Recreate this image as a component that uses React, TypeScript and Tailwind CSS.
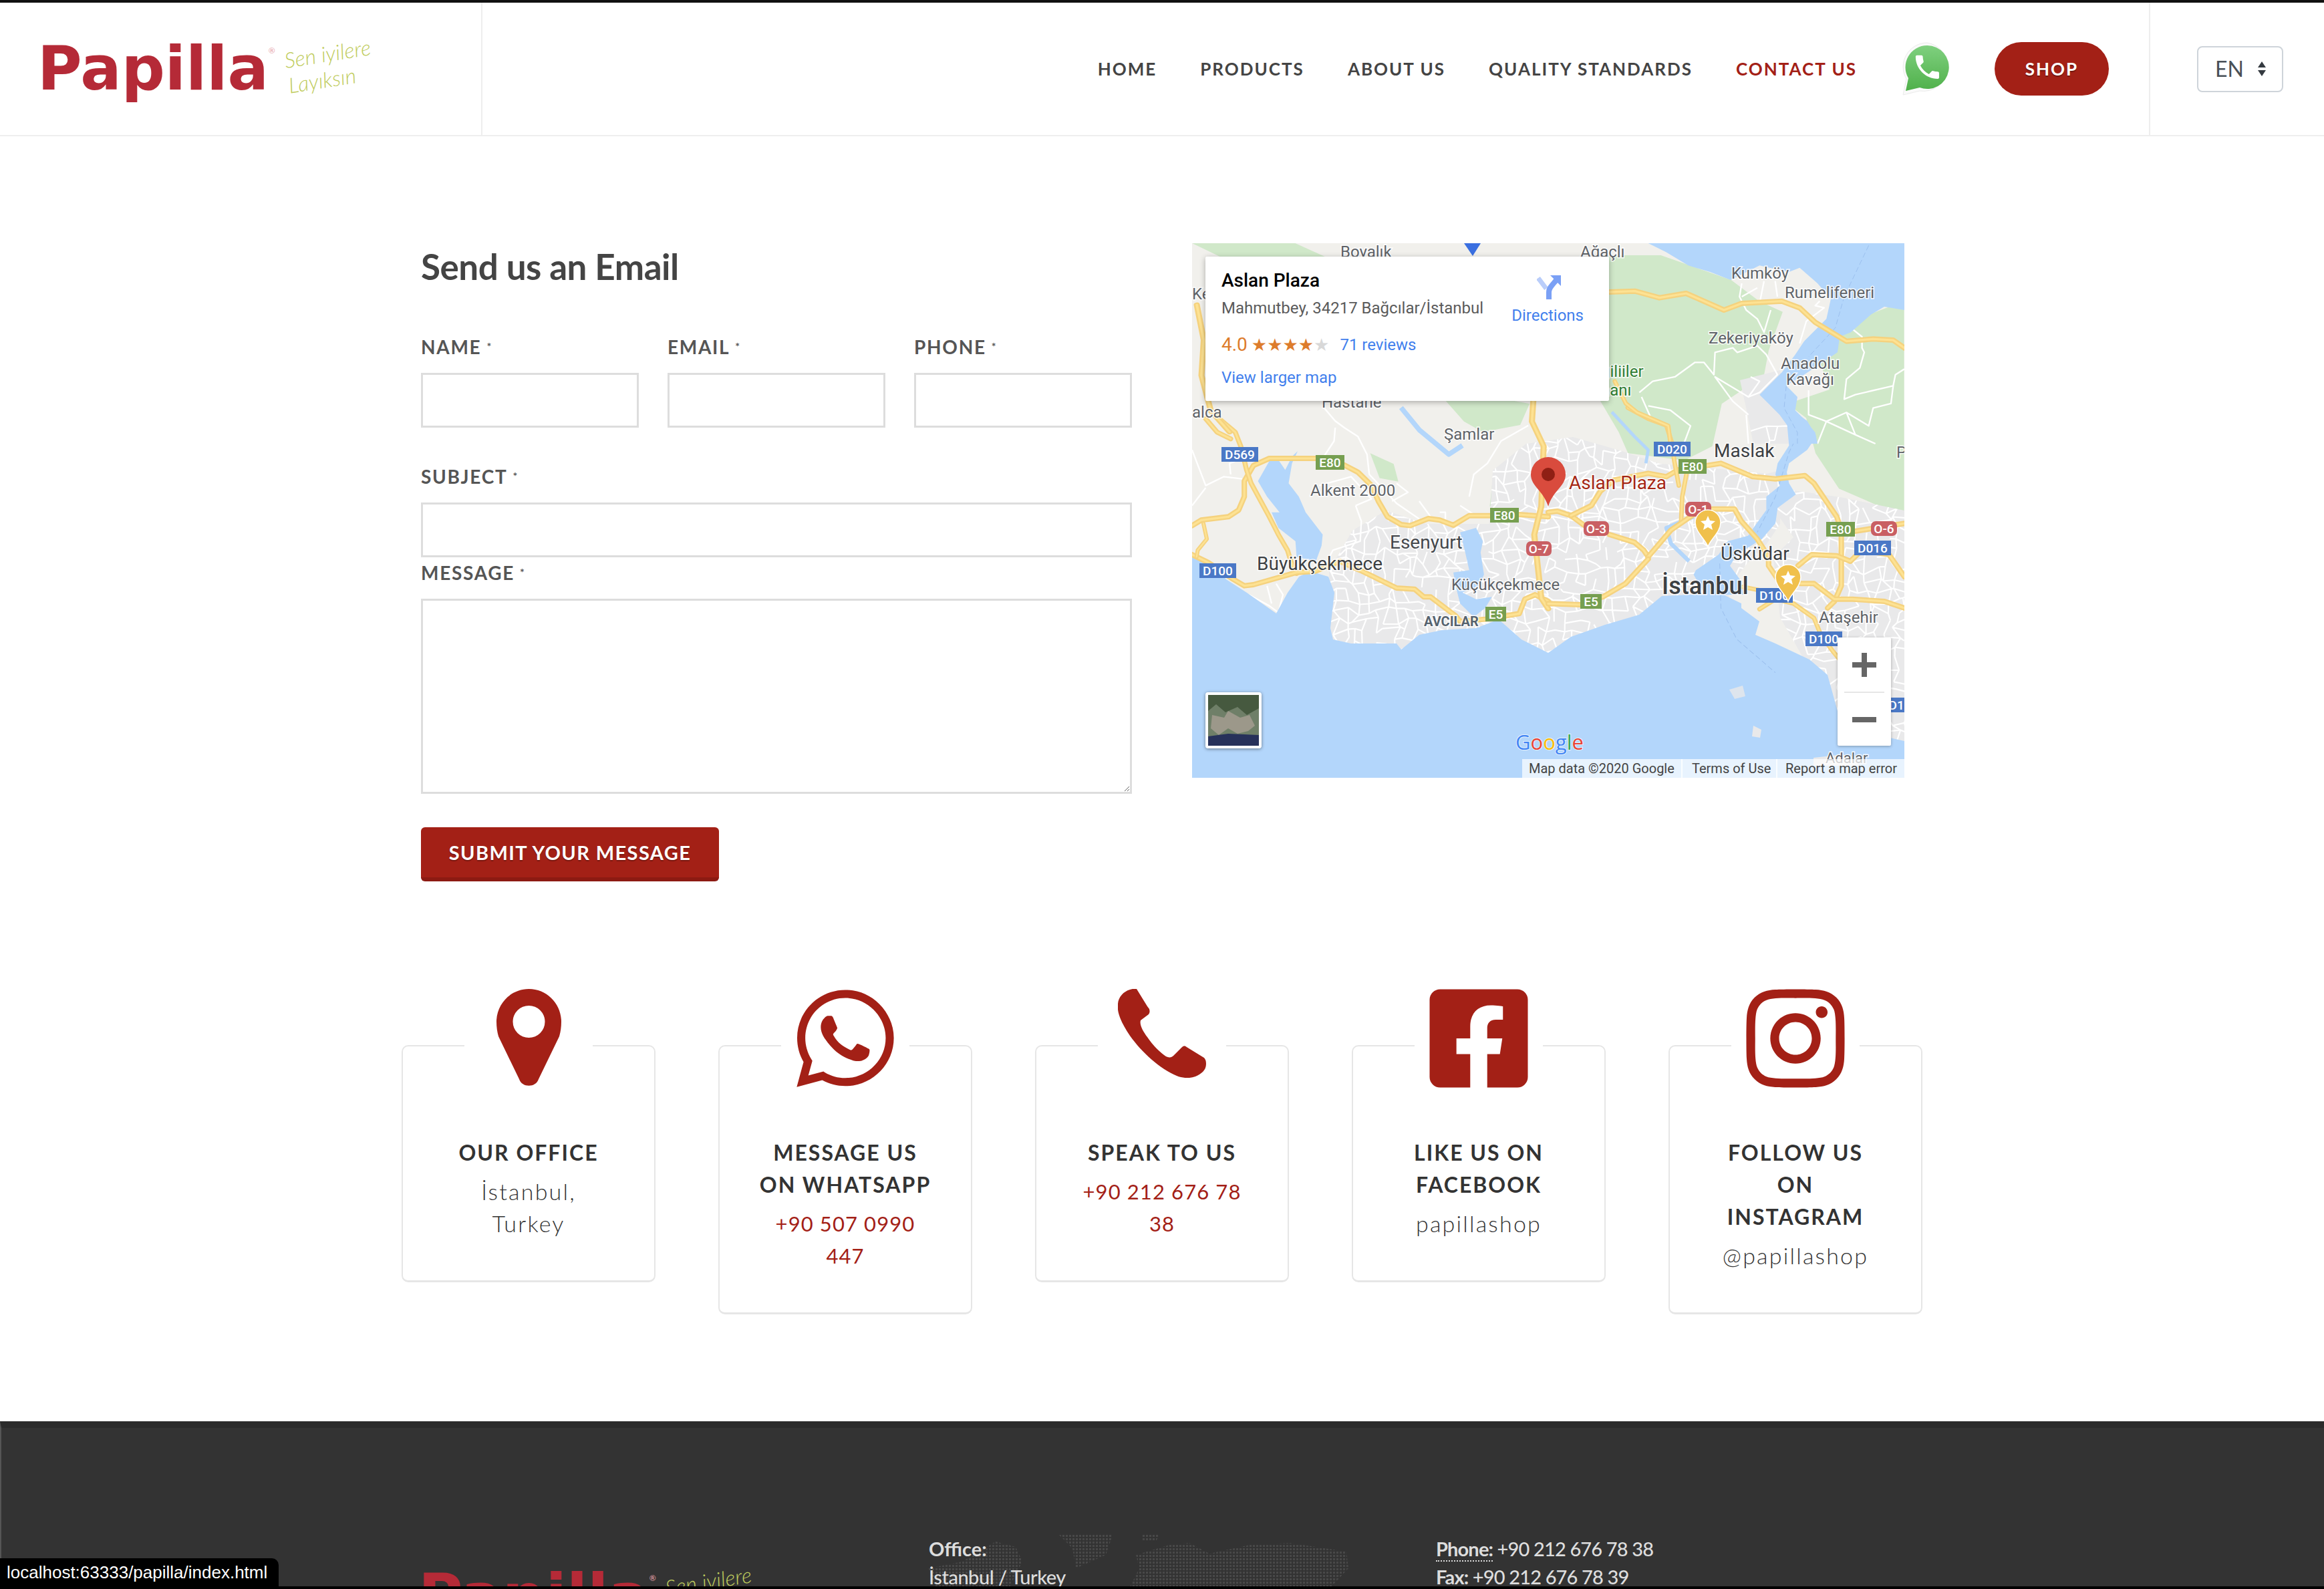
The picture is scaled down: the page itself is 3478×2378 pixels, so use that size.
import React from "react";
import { FaWhatsapp, FaFacebookSquare, FaInstagram } from "react-icons/fa";

const RED = "text-[#a32016]";

// street mesh for the map, a jittered grid so it does not look like graph paper
const makeMesh = (x0: number, y0: number, x1: number, y1: number, step: number, seed: number, keep: number) => {
  let s = seed;
  const rnd = () => {
    s = (s * 16807) % 2147483647;
    return s / 2147483647;
  };
  const cols = Math.ceil((x1 - x0) / step);
  const rows = Math.ceil((y1 - y0) / step);
  const pts: number[][][] = [];
  for (let r = 0; r <= rows; r++) {
    pts[r] = [];
    for (let c = 0; c <= cols; c++) {
      pts[r][c] = [x0 + c * step + (rnd() - 0.5) * step * 0.95, y0 + r * step + (rnd() - 0.5) * step * 0.95];
    }
  }
  let d = "";
  for (let r = 0; r <= rows; r++) {
    for (let c = 0; c <= cols; c++) {
      const p = pts[r][c];
      if (c < cols && rnd() < keep) d += `M${p[0].toFixed(1)} ${p[1].toFixed(1)}L${pts[r][c + 1][0].toFixed(1)} ${pts[r][c + 1][1].toFixed(1)}`;
      if (r < rows && rnd() < keep) d += `M${p[0].toFixed(1)} ${p[1].toFixed(1)}L${pts[r + 1][c][0].toFixed(1)} ${pts[r + 1][c][1].toFixed(1)}`;
    }
  }
  return d;
};

const denseMesh = makeMesh(200, 280, 1066, 780, 15, 4711, 0.76);

const Shield = ({ x, y, w, label, kind }: { x: number; y: number; w: number; label: string; kind: "g" | "b" | "r" }) => (
  <g>
    <rect x={x} y={y} width={w} height={22} rx={kind === "r" ? 7 : 0} fill={kind === "g" ? "#769f50" : kind === "b" ? "#4a78c6" : "#c95f63"} />
    <text x={x + w / 2} y={y + 18} textAnchor="middle" fontFamily="Roboto" fontWeight={500} fontSize={19} fill="#fff">
      {label}
    </text>
  </g>
);

const Label = ({ x, y, size = 24, fill = "#5f6368", weight = 400, children }: { x: number; y: number; size?: number; fill?: string; weight?: number; children: React.ReactNode }) => (
  <text x={x} y={y} fontFamily="Roboto" fontSize={size} fontWeight={weight} fill={fill} stroke="#ffffff" strokeOpacity={0.85} strokeWidth={3} paintOrder="stroke">
    {children}
  </text>
);

const Road = ({ d, w = 9 }: { d: string; w?: number }) => (
  <g fill="none" strokeLinejoin="round" strokeLinecap="round">
    <path d={d} stroke="#f5d27e" strokeWidth={w} />
    <path d={d} stroke="#fde293" strokeWidth={w * 0.4} />
  </g>
);

const YellowPin = ({ x, y }: { x: number; y: number }) => (
  <g transform={`translate(${x} ${y})`}>
    <path d="M19 55C15 44 0 33 0 19a19 19 0 0 1 38 0C38 33 23 44 19 55z" fill="#f0c04c" stroke="#fff" strokeWidth={1.5} />
    <polygon points="19,9 22,16 30,17 24,22 26,30 19,26 12,30 14,22 8,17 16,16" fill="#fff" />
  </g>
);

const MapArt = () => (
  <svg width={1066} height={800} viewBox="0 0 1066 800" className="absolute left-0 top-0">
    <defs>
      <clipPath id="urban">
        <polygon points="205,600 205,490 240,430 290,400 350,420 445,420 450,340 500,300 570,290 640,310 700,330 760,335 860,345 880,340 880,420 860,450 830,480 800,520 830,600 400,640" />
        <polygon points="830,340 900,370 970,380 1066,400 1066,780 960,700 880,560 870,470 900,440" />
        <polygon points="820,205 880,190 890,250 900,300 840,300 830,250" />
      </clipPath>
    </defs>
    <rect width={1066} height={800} fill="#f1f0ec" />

    {/* green, traced in the squashed zoom coordinates */}
    <g transform="translate(-14 -13.8) scale(.7015 .5293)" fill="#d0e8c9">
      <polygon points="909,60 1020,60 1170,130 1230,190 1280,220 1250,330 1240,400 1150,480 1130,600 1070,640 950,620 930,560 890,470 909,400" />
      <polygon points="1340,290 1539,190 1539,800 1400,720 1350,620 1330,520 1290,480 1380,440" />
      <polygon points="560,470 700,470 740,480 720,540 640,560 600,530" />
      <polygon points="20,26 240,26 330,80 200,130 120,90" />
      <polygon points="400,620 450,650 460,700 420,690" />
      <polygon points="660,710 680,710 680,770 655,770" />
    </g>

    <polygon points="205,600 205,490 240,430 290,400 350,420 445,420 450,340 500,300 570,290 640,310 700,330 760,335 860,345 880,340 880,420 860,450 830,480 800,520 830,600 400,640" fill="#e9e9ea" />
    <polygon points="830,340 900,370 970,380 1066,400 1066,780 960,700 880,560 870,470 900,440" fill="#e9e9ea" />
    <polygon points="820,205 880,190 890,250 900,300 840,300 830,250" fill="#e9e9ea" />
    <path d={denseMesh} clipPath="url(#urban)" stroke="#fff" strokeWidth={2.2} fill="none" />

    {/* sparse roads, west side */}
    <g transform="translate(0 246) scale(.34 .3333)" fill="none" stroke="#fff" strokeWidth={7} strokeLinejoin="round">
      <path d="M0 190L60 350L140 310L220 320M0 440L60 360M170 300L165 250L240 220" />
      <path d="M580 0L630 60L670 90L730 130L770 210L780 300L900 430L1000 500" />
      <path d="M630 90L625 150L580 220M720 440L745 510L740 600L620 640L590 700" />
      <path d="M720 440L790 410L700 310L560 350M900 340L950 380L880 420" />
      <path d="M1000 420L1050 490M1090 470L1115 470L1115 510M1220 400L1240 300L1300 250L1360 150L1480 80" />
      <path d="M250 840L340 890L380 920L400 840L370 790M330 800L350 880" />
      <path d="M1180 440L1240 480" />
    </g>

    {/* sparse roads, north side */}
    <g transform="translate(616 0) scale(.3333)" fill="none" stroke="#fff" strokeWidth={7} strokeLinejoin="round">
      <path d="M160 670L220 620L320 600L410 535L450 535L495 590L500 490L580 470L600 490L690 460L730 500L780 590L700 670L650 690L500 600L580 710L650 770" />
      <path d="M640 770L650 900M200 730L300 750L390 820L360 900M170 690L210 780" />
      <path d="M620 180L610 240L640 300L690 340L720 400L750 300M720 170L700 270M770 170L780 240M620 240L690 200" />
      <path d="M880 450L910 350L990 290L950 280L970 260" />
      <path d="M1110 380L1160 420L1160 470L1170 490L1150 560L1090 610L1080 700L1130 680L1300 640L1310 590L1350 565" />
      <path d="M920 660L920 770L1000 800L1090 760L1190 820L1210 740L1290 720L1300 640" />
      <path d="M1000 800L1130 860L1220 900M1090 760L1130 860" />
      <path d="M960 900L1000 800M660 600L700 620L650 690" />
    </g>

    {/* water */}
    <polygon points="0,466 27,479 51,503 82,523 126,554 143,523 160,499 177,491 204,499 213,523 207,576 211,593 238,599 306,599 313,608 340,586 374,579 425,576 459,563 493,593 533,613 567,589 618,571 669,556 703,528 791,524 822,539 822,546 849,566 843,586 873,599 924,623 951,646 966,700 1000,730 1066,745 1066,800 0,800" fill="#b3d6fb" />
    <g transform="translate(0 246) scale(.34 .3333)" fill="#b3d6fb">
      <polygon points="290,330 340,240 380,235 410,280 440,220 465,195 440,250 425,340 470,400 500,470 575,570 570,620 545,690 460,670 455,600 380,540 350,470 385,470 330,400" />
      <polygon points="1180,560 1250,540 1280,600 1270,650 1285,750 1260,800 1190,830 1250,860 1320,850 1290,900 1240,940 1180,880 1160,800 1150,740 1220,730 1200,640" />
      <path d="M920 0L1000 100L1130 210L1190 170" fill="none" stroke="#b3d6fb" strokeWidth={22} strokeLinejoin="round" />
    </g>
    <g transform="translate(533 246) scale(.34 .3333)" fill="#b3d6fb">
      <polygon points="1010,0 1050,60 1060,170 1010,250 1000,300 1020,350 960,400 960,460 910,530 880,575 790,600 750,660 650,730 640,750 690,840 860,840 850,780 800,710 830,660 940,590 1000,520 1010,450 1090,390 1060,340 1050,290 1060,250 1140,190 1180,130 1140,60 1060,0" />
      <path d="M640 490L520 540L540 610L620 690" fill="none" stroke="#b3d6fb" strokeWidth={18} strokeLinejoin="round" />
      <path d="M280 20L380 130L440 190L430 250" fill="none" stroke="#b3d6fb" strokeWidth={14} strokeLinejoin="round" />
      <path d="M755 700L760 900L830 1040L1000 1190M1100 120L1060 200L1000 400L920 560" fill="none" stroke="#9cc0ee" strokeWidth={3} strokeDasharray="24 12" />
    </g>
    <g transform="translate(616 0) scale(.3333)" fill="#b3d6fb">
      <polygon points="200,0 280,40 380,100 480,130 570,165 700,100 830,130 880,110 960,180 1020,250 1000,340 900,440 860,500 800,580 700,680 740,720 790,770 840,840 850,900 960,900 950,850 900,790 860,750 870,690 820,640 900,590 1050,490 1060,420 1110,400 1200,320 1260,285 1350,300 1350,0" />
      <path d="M1190 10L1080 240L1040 380L920 510M820 640L810 740L870 850L870 900" fill="none" stroke="#9cc0ee" strokeWidth={3} strokeDasharray="24 12" />
    </g>
    <polygon points="804,668 824,662 828,678 812,682" fill="#e9e9ea" opacity={0.8} />
    <polygon points="840,722 852,728 850,740 838,738" fill="#e9e9ea" />
    <polygon points="930,770 975,765 1000,782 930,782" fill="#e9e9ea" />

    {/* highways */}
    <g transform="translate(0 246) scale(.34 .3333)">
      <Road w={24} d="M0 530L40 505L160 490L205 460L230 400L230 330L270 260L340 228L545 228L670 258L730 290L790 350L820 420L860 490L920 525L960 530L1040 498L1090 505L1150 528L1220 485L1320 485L1440 480L1568 490" />
      <Road w={22} d="M60 50L110 110L170 140M120 50L190 110L215 175L240 280L260 340L340 490L380 570L420 640L435 690L460 745" />
      <Road w={24} d="M0 660L70 695L180 770L230 800L270 795L460 740L540 735L650 690L750 735L900 810L980 815L1020 850L1050 850L1160 935L1180 960L1290 950L1440 925L1465 860L1510 840L1568 870" />
      <Road w={18} d="M50 520L65 590L25 640L20 670" />
    </g>
    <g transform="translate(-14 -13.8) scale(.7015 .5293)">
      <Road w={13} d="M748 470L745 530L770 600L765 770L750 850L765 1030L780 1060" />
      <Road w={13} d="M30 200L45 300L40 400L60 500L100 560" />
    </g>
    <g transform="translate(533 246) scale(.34 .3333)">
      <Road w={24} d="M0 470L40 465L100 485L160 530M270 570L380 605L420 640L440 670" />
      <Road w={24} d="M100 485L190 440L230 375L290 325L440 295L520 310L570 280L700 260L760 250L900 310L1000 320L1130 305L1170 340L1270 490L1290 550L1290 800L1260 870L1230 900" />
      <Road w={20} d="M350 0L440 50L520 80L545 160L555 240L575 350M610 290L590 400L585 510" />
      <Road w={24} d="M440 670L540 550L640 480L720 455L820 455L850 510L920 590L970 670L970 710L1010 770" />
      <Road w={24} d="M0 880L140 885L240 850L340 790L440 680" />
      <Road w={20} d="M855 805L930 820M930 905L1000 860L1080 880L1170 945L1200 1020L1250 1090L1290 1140" />
      <Road w={24} d="M1110 790L1170 790L1260 860L1340 860L1480 870L1568 900M1100 710L1160 660L1270 665L1330 690L1380 640L1500 660L1568 760M1350 555L1568 520" />
    </g>
    <g transform="translate(616 0) scale(.3333)">
      <Road w={24} d="M0 220L140 215L250 245L370 225L540 300L620 270L800 260L880 290L950 355L1090 440L1210 430L1300 435L1350 470" />
      <Road w={20} d="M50 620L100 720L150 760L220 790L290 820L300 900" />
    </g>

    {/* shields */}
    <Shield x={44} y={305} w={55} label="D569" kind="b" />
    <Shield x={185} y={317} w={43} label="E80" kind="g" />
    <Shield x={11} y={479} w={55} label="D100" kind="b" />
    <Shield x={446} y={396} w={43} label="E80" kind="g" />
    <Shield x={500} y={446} w={38} label="O-7" kind="r" />
    <Shield x={439} y={544} w={31} label="E5" kind="g" />
    <Shield x={691} y={297} w={55} label="D020" kind="b" />
    <Shield x={728} y={323} w={42} label="E80" kind="g" />
    <Shield x={738} y={387} w={39} label="O-1" kind="r" />
    <Shield x={586} y={416} w={38} label="O-3" kind="r" />
    <Shield x={581} y={525} w={32} label="E5" kind="g" />
    <Shield x={844} y={516} w={55} label="D100" kind="b" />
    <Shield x={949} y={417} w={43} label="E80" kind="g" />
    <Shield x={1016} y={416} w={39} label="O-6" kind="r" />
    <Shield x={991} y={445} w={55} label="D016" kind="b" />
    <Shield x={918} y={581} w={55} label="D100" kind="b" />
    <Shield x={1045} y={680} w={40} label="D100" kind="b" />

    {/* place names */}
    <Label x={222} y={21}>Boyalık</Label>
    <Label x={581} y={21}>Ağaçlı</Label>
    <Label x={0} y={84}>Ke</Label>
    <Label x={0} y={261}>alca</Label>
    <Label x={194} y={246}>Hastane</Label>
    <Label x={807} y={53}>Kumköy</Label>
    <Label x={887} y={82}>Rumelifeneri</Label>
    <Label x={773} y={150}>Zekeriyaköy</Label>
    <Label x={881} y={188}>Anadolu</Label>
    <Label x={889} y={212}>Kavağı</Label>
    <Label x={612} y={200} fill="#2e7d32">giliiler</Label>
    <Label x={612} y={228} fill="#2e7d32">hanı</Label>
    <Label x={377} y={294}>Şamlar</Label>
    <Label x={177} y={378}>Alkent 2000</Label>
    <Label x={296} y={457} size={28} fill="#45484c">Esenyurt</Label>
    <Label x={97} y={489} size={28} fill="#3c4043">Büyükçekmece</Label>
    <Label x={388} y={519}>Küçükçekmece</Label>
    <Label x={347} y={573} size={20} weight={700} fill="#56636f">AVCILAR</Label>
    <Label x={781} y={320} size={28} fill="#3c4043">Maslak</Label>
    <Label x={791} y={474} size={28} fill="#3c4043">Üsküdar</Label>
    <Label x={703} y={525} size={36} weight={500} fill="#3c4043">İstanbul</Label>
    <Label x={938} y={568}>Ataşehir</Label>
    <Label x={1054} y={321}>P</Label>
    <Label x={948} y={778} size={22}>Adalar</Label>
    <Label x={564} y={368} size={28} fill="#a52714">Aslan Plaza</Label>

    <YellowPin x={753} y={399} />
    <YellowPin x={873} y={481} />

    <path d="M533 394C526 370 507 364 507 346a26 26 0 0 1 52 0C559 364 540 370 533 394z" fill="#d94b3d" />
    <circle cx={533} cy={346} r={10} fill="#8f1f14" />
    <polygon points="407,0 432,0 420,19" fill="#3a6fe0" />

    <text x={484} y={758} fontFamily="Open Sans" fontSize={31} stroke="#fff" strokeOpacity={0.7} strokeWidth={2} paintOrder="stroke">
      <tspan fill="#4285f4">G</tspan>
      <tspan fill="#ea4335">o</tspan>
      <tspan fill="#fbbc05">o</tspan>
      <tspan fill="#4285f4">g</tspan>
      <tspan fill="#34a853">l</tspan>
      <tspan fill="#ea4335">e</tspan>
    </text>
  </svg>
);

const MapBox = () => (
  <div className="relative h-[800px] w-[1066px] shrink-0 overflow-hidden bg-[#b3d6fb] font-[family-name:Roboto,sans-serif]">
    <MapArt />
    <div className="absolute left-[20px] top-[20px] flex h-[216px] w-[604px] justify-between rounded-[2px] bg-white pl-[24px] pr-[38px] pt-[20px] shadow-[0_2px_8px_rgba(0,0,0,0.3)]">
      <div>
        <div className="text-[28px] font-medium leading-[32px] text-black">Aslan Plaza</div>
        <div className="mt-[10px] text-[24px] leading-[30px] text-[#5b5b5b]">Mahmutbey, 34217 Bağcılar/İstanbul</div>
        <div className="mt-[24px] flex items-center text-[24px] leading-[32px] text-[#427fed]">
          <span className="text-[28px] text-[#dd7c2c]">4.0</span>
          <span className="ml-[6px] font-[family-name:DejaVu_Sans,sans-serif] text-[26px] text-[#dd7c2c]">
            ★★★★<span className="text-[#d8d8d8]">★</span>
          </span>
          <span className="ml-[16px]">71 reviews</span>
        </div>
        <div className="mt-[18px] text-[24px] leading-[30px] text-[#427fed]">View larger map</div>
      </div>
      <div className="flex flex-col items-center pt-[8px] text-[24px] leading-[30px] text-[#427fed]">
        <svg width={36} height={36} viewBox="0 0 36 36" className="ml-[4px]">
          <path d="M2 4L14 20" stroke="#b9cdfa" strokeWidth={7} fill="none" />
          <path d="M18 36V25C18 18 24 14 30 6" stroke="#7aa0f5" strokeWidth={8} fill="none" />
          <polygon points="36,0 36,16 20,0" fill="#7aa0f5" />
        </svg>
        <div className="mt-[9px]">Directions</div>
      </div>
    </div>
    <div className="absolute left-[20px] top-[672px] h-[84px] w-[84px] overflow-hidden rounded-[4px] border-[4px] border-white shadow-[0_1px_5px_rgba(0,0,0,0.45)]">
      <svg width={76} height={76} viewBox="0 0 76 76">
        <rect width={76} height={76} fill="#6f7f68" />
        <path d="M0 0H76V20L58 30L44 18L26 26L12 14L0 24z" fill="#46593f" />
        <path d="M6 30L24 34L30 24L48 34L62 30L70 46L60 54L44 58L30 50L16 60L4 50z" fill="#9c988a" />
        <path d="M0 62L30 58L76 60V76H0z" fill="#27315a" />
      </svg>
    </div>
    <div className="absolute left-[966px] top-[590px] flex h-[162px] w-[80px] flex-col items-center rounded-[2px] bg-white shadow-[0_1px_4px_rgba(0,0,0,0.3)]">
      <div className="flex h-[81px] w-full items-center justify-center">
        <div className="relative h-[36px] w-[36px]">
          <div className="absolute left-0 top-[14px] h-[8px] w-[36px] bg-[#666]" />
          <div className="absolute left-[14px] top-0 h-[36px] w-[8px] bg-[#666]" />
        </div>
      </div>
      <div className="h-[2px] w-[60px] bg-[#e6e6e6]" />
      <div className="flex h-[79px] w-full items-center justify-center">
        <div className="h-[8px] w-[36px] bg-[#666]" />
      </div>
    </div>
    <div className="absolute bottom-0 left-[494px] flex h-[28px] w-[572px] items-center bg-white/70 text-[20px] leading-[28px] text-[#444]">
      <span className="w-[238px] pl-[10px]">Map data ©2020 Google</span>
      <span className="h-full w-[2px] bg-white/80" />
      <span className="w-[140px] pl-[14px]">Terms of Use</span>
      <span className="h-full w-[2px] bg-white/80" />
      <span className="pl-[12px]">Report a map error</span>
    </div>
  </div>
);

// real text standing in for the wordmark image
const Logo = () => (
  <div className="-ml-[4px] flex h-[100px] items-start">
    <span className="font-[family-name:DejaVu_Sans,sans-serif] text-[91px] font-bold leading-[100px] text-[#b52a37]">Papilla</span>
    <span className="mt-[16px] text-[12px] leading-[14px] text-[#e6a0a8]">®</span>
    <div className="ml-[16px] mt-[8px] w-[130px] -rotate-[9deg] font-[family-name:Lato,sans-serif] text-[32px] font-light italic leading-[38px] text-[#bfcc5e]">
      <div className="whitespace-nowrap">Sen iyilere</div>
      <div className="whitespace-nowrap">Layıksın</div>
    </div>
  </div>
);

const HeaderWhatsapp = () => (
  <svg width={74} height={80} viewBox="0 0 74 80">
    <defs>
      <linearGradient id="wa" x1="0" y1="0" x2="0" y2="1">
        <stop offset="0" stopColor="#7fd07f" />
        <stop offset="1" stopColor="#4fb04a" />
      </linearGradient>
    </defs>
    <path d="M37 1a36 36 0 0 0-31 54L1 79l25-6A36 36 0 1 0 37 1z" fill="#fafafa" stroke="#ebebeb" strokeWidth={1} />
    <path d="M37 5a32.500 32.500 0 0 0-28 49L5 73l21-5A32.500 32.500 0 1 0 37 5z" fill="url(#wa)" />
    <path transform="translate(14 14) scale(1.95)" d="M6.62 10.79c1.44 2.83 3.76 5.14 6.59 6.59l2.2-2.2c.27-.27.67-.36 1.02-.24 1.12.37 2.33.57 3.57.57.55 0 1 .45 1 1V20c0 .55-.45 1-1 1-9.39 0-17-7.61-17-17 0-.55.45-1 1-1h3.5c.55 0 1 .45 1 1 0 1.25.2 2.45.57 3.57.11.35.03.74-.25 1.02l-2.2 2.2z" fill="#fff" />
  </svg>
);

const Header = () => {
  const links = ["HOME", "PRODUCTS", "ABOUT US", "QUALITY STANDARDS"];
  return (
    <header className="flex h-[200px] border-b-2 border-[#eeeeee] font-[family-name:Lato,sans-serif]">
      <div className="flex w-[722px] shrink-0 items-center border-r-2 border-[#eeeeee] pl-[60px]">
        <Logo />
      </div>
      <nav className="flex flex-1 items-center justify-end pr-[60px]">
        {links.map((l) => (
          <a key={l} className="mr-[65px] text-[26px] font-bold tracking-[2px] text-[#444444]">
            {l}
          </a>
        ))}
        <a className="mr-[68px] text-[26px] font-bold tracking-[2px] text-[#a32016]">CONTACT US</a>
        <HeaderWhatsapp />
        <a className="ml-[64px] flex h-[80px] w-[171px] items-center justify-center rounded-full bg-[#a32016] text-[26px] font-bold tracking-[2px] text-white [text-shadow:0_2px_1px_rgba(0,0,0,0.3)]">SHOP</a>
      </nav>
      <div className="flex w-[262px] shrink-0 items-center border-l-2 border-[#eeeeee] pl-[70px]">
        <div className="flex h-[69px] w-[129px] items-center justify-between rounded-[8px] border-2 border-[#ced4da] pl-[25px] pr-[22px] text-[32px] text-[#495057]">
          <span>EN</span>
          <svg width={16} height={24} viewBox="0 0 16 24" fill="#343a40">
            <polygon points="8,1 14,10 2,10" />
            <polygon points="8,23 14,14 2,14" />
          </svg>
        </div>
      </div>
    </header>
  );
};

const fieldClass = "block w-full border-[3px] border-[#dddddd] bg-white outline-none";

const FieldLabel = ({ text }: { text: string }) => (
  <label className="mb-[19px] block h-[40px] text-[28px] font-bold leading-[40px] tracking-[1.7px] text-[#555555]">
    {text}
    <span className="relative top-[-6px] ml-[8px] text-[16px] leading-none">*</span>
  </label>
);

const ContactForm = () => (
  <form className="w-[1064px] shrink-0 font-[family-name:Lato,sans-serif]">
    <h3 className="mb-[65px] text-[53px] font-bold leading-[70px] tracking-[-0.5px] text-[#444444]">Send us an Email</h3>
    <div className="grid grid-cols-3 gap-x-[43px]">
      {["NAME", "EMAIL", "PHONE"].map((f) => (
        <div key={f}>
          <FieldLabel text={f} />
          <input className={`${fieldClass} h-[82px]`} />
        </div>
      ))}
    </div>
    <div className="mt-[53px]">
      <FieldLabel text="SUBJECT" />
      <input className={`${fieldClass} h-[82px]`} />
    </div>
    <div className="mt-[3px]">
      <FieldLabel text="MESSAGE" />
      <textarea className={`${fieldClass} h-[292px]`} />
    </div>
    <button type="button" className="mt-[50px] block h-[81px] w-[446px] rounded-[6px] border-b-[6px] border-[#8c1a12] bg-[#a32016] text-[29px] font-bold tracking-[1.4px] text-white [text-shadow:0_2px_1px_rgba(0,0,0,0.25)]">
      SUBMIT YOUR MESSAGE
    </button>
  </form>
);

const PinIcon = () => (
  <svg width={97} height={145} viewBox="0 0 97 145" fill="#a32016">
    <path fillRule="evenodd" d="M48.5 0C21.700 0 0 22 0 49c0 8 1 15 3 22l31 64c4 13 25 13 29 0l31-64c2-7 3-14 3-22C97 22 75.300 0 48.500 0zm0 73a24 24 0 1 1 0-48 24 24 0 0 1 0 48z" />
  </svg>
);

const PhoneIcon = () => (
  <svg width={132} height={133} viewBox="0 0 132 133" fill="#a32016">
    <path d="M18 1Q24-1 28 0L44 26Q50 32 46 38L34 47C32 54 38 64 44 72C52 84 64 96 72 101C76 103 80 103 83 100L95 88Q99 83 103 87L129 103Q132 106 132 112C132 122 125 127 116 131C108 134 98 134 88 130C62 119 36 95 18 70C6 52-2 36 0 22C1 12 8 4 18 1Z" />
  </svg>
);

const cards: { icon: React.ReactNode; title: string[]; body: string[]; red?: boolean }[] = [
  { icon: <PinIcon />, title: ["OUR OFFICE"], body: ["İstanbul,", "Turkey"] },
  { icon: <FaWhatsapp size={166} className="-mt-[9px] shrink-0" />, title: ["MESSAGE US", "ON WHATSAPP"], body: ["+90 507 0990", "447"], red: true },
  { icon: <PhoneIcon />, title: ["SPEAK TO US"], body: ["+90 212 676 78", "38"], red: true },
  { icon: <FaFacebookSquare size={168} className="-mt-[10px] shrink-0" />, title: ["LIKE US ON", "FACEBOOK"], body: ["papillashop"] },
  { icon: <FaInstagram size={168} className="-mt-[10px] shrink-0" />, title: ["FOLLOW US", "ON", "INSTAGRAM"], body: ["@papillashop"] },
];

const InfoCards = () => (
  <div className="ml-[601px] mt-[245px] flex w-[2276px] items-start justify-between font-[family-name:Lato,sans-serif]">
    {cards.map((c) => (
      <div key={c.title[0]} className="w-[380px] rounded-[10px] border-2 border-b-[3px] border-[#e6e6e6] px-[30px] pb-[61px] text-center">
        <div className={`mx-auto -mt-[86px] flex h-[147px] w-[192px] items-start justify-center bg-white ${RED}`}>{c.icon}</div>
        <div className="mt-[74px] text-[32px] font-bold leading-[48px] tracking-[2px] text-[#333333]">
          {c.title.map((t) => (
            <div key={t}>{t}</div>
          ))}
        </div>
        <div className={`mt-[10px] leading-[48px] ${c.red ? "text-[31px] font-normal tracking-[1.1px] text-[#a32016]" : "text-[34px] font-light tracking-[2.2px] text-[#333333]"}`}>
          {c.body.map((t) => (
            <div key={t}>{t}</div>
          ))}
        </div>
      </div>
    ))}
  </div>
);

const WorldDots = () => (
  <svg width={640} height={80} viewBox="0 0 640 80" className="absolute left-[760px] top-[160px]">
    <defs>
      <pattern id="dots" width={5} height={5} patternUnits="userSpaceOnUse">
        <rect width={3} height={3} fill="#484848" />
      </pattern>
    </defs>
    <g fill="url(#dots)">
      <polygon points="0,50 50,40 100,10 130,18 140,40 120,80 10,80" />
      <polygon points="195,0 275,0 265,30 220,50 215,20" />
      <polygon points="320,0 345,0 340,10 320,10" />
      <polygon points="310,30 360,15 390,12 420,28 480,15 540,12 625,25 628,50 600,80 300,80 315,50" />
    </g>
  </svg>
);

const Footer = () => (
  <footer className="relative min-h-0 flex-1 overflow-hidden border-l-2 border-t-[10px] border-l-[#555555] border-t-[#2b2b2b] bg-[#333333] font-[family-name:Lato,sans-serif]">
    <div className="relative ml-[628px] flex w-[2220px] pt-[160px] text-[29px] font-medium leading-[42px] text-[#dddddd]">
      <WorldDots />
      <div className="w-[760px] shrink-0 pt-[42px]">
        <Logo />
      </div>
      <div className="relative w-[759px] shrink-0">
        <div className="font-bold">Office:</div>
        <div className="tracking-[-0.5px]">İstanbul / Turkey</div>
      </div>
      <div className="relative tracking-[-0.85px]">
        <div>
          <span className="border-b-2 border-dotted border-[#dddddd] font-bold">Phone:</span> +90 212 676 78 38
        </div>
        <div>
          <span className="border-b-2 border-dotted border-[#dddddd] font-bold">Fax:</span> +90 212 676 78 39
        </div>
      </div>
    </div>
  </footer>
);

export default function App() {
  return (
    <div className="relative flex h-[2378px] w-[3478px] flex-col overflow-hidden bg-white">
      <div className="h-[4px] shrink-0 bg-[#111111]" />
      <Header />
      <main className="shrink-0">
        <div className="ml-[630px] flex w-[2220px] items-start justify-between pt-[160px]">
          <ContactForm />
          <MapBox />
        </div>
        <InfoCards />
      </main>
      <div className="h-[160px] shrink-0" />
      <Footer />
      <div className="h-[4px] shrink-0 bg-black" />
      <div className="absolute bottom-[4px] left-0 flex h-[42px] w-[417px] items-center rounded-tr-[10px] bg-black pl-[10px] font-[family-name:Liberation_Sans,sans-serif] text-[26px] text-white">
        localhost:63333/papilla/index.html
      </div>
    </div>
  );
}
